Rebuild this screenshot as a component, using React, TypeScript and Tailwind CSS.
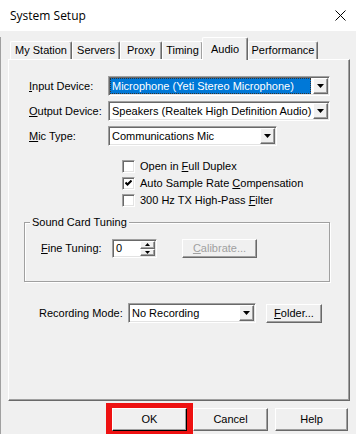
import React from "react";

const sunken =
  "border border-t-[#a0a0a0] border-l-[#a0a0a0] border-r-white border-b-white shadow-[inset_1px_1px_0_#696969,inset_-1px_-1px_0_#e3e3e3]";
const raised =
  "border border-t-white border-l-white border-r-[#696969] border-b-[#696969] shadow-[inset_-1px_-1px_0_#a0a0a0] bg-[#f0f0f0]";

function DownArrow() {
  return (
    <div className={`flex w-[15px] shrink-0 items-center justify-center ${raised}`}>
      <svg width="7" height="4" viewBox="0 0 7 4">
        <path d="M0 0h7L3.5 4z" fill="#000" />
      </svg>
    </div>
  );
}

function Combo({ className, text, selected }: { className: string; text: string; selected?: boolean }) {
  return (
    <div className={`flex h-[20px] shrink-0 bg-white p-px ${sunken} ${className}`}>
      <div className="flex min-w-0 flex-1 pr-[2px]">
        <div
          className={
            selected
              ? "flex w-full items-center whitespace-nowrap border border-dotted border-[#333] bg-[#0078d7] px-[1px] text-white"
              : "flex w-full items-center whitespace-nowrap px-[2px]"
          }
        >
          {text}
        </div>
      </div>
      <DownArrow />
    </div>
  );
}

function Label({ className, children }: { className: string; children: React.ReactNode }) {
  return <div className={`shrink-0 whitespace-nowrap ${className}`}>{children}</div>;
}

function Check({ checked, children }: { checked?: boolean; children: React.ReactNode }) {
  return (
    <div className="flex h-[17px] items-center">
      <div className={`flex h-[13px] w-[13px] items-center justify-center bg-white ${sunken}`}>
        {checked && (
          <svg width="7" height="7" viewBox="0 0 7 7">
            <path d="M0.5 2.5l2 2L6.5 0.5" stroke="#000" strokeWidth="2" fill="none" />
          </svg>
        )}
      </div>
      <span className="ml-[5px] whitespace-nowrap">{children}</span>
    </div>
  );
}

function Button({ className, children, disabled }: { className: string; children: React.ReactNode; disabled?: boolean }) {
  return (
    <div
      className={`flex shrink-0 items-center justify-center ${raised} ${disabled ? "text-[#a0a0a0]" : ""} ${className}`}
    >
      {children}
    </div>
  );
}

const tabs = [
  { name: "My Station", w: "w-[62px]" },
  { name: "Servers", w: "w-[48px]" },
  { name: "Proxy", w: "w-[42px]" },
  { name: "Timing", w: "w-[41px]" },
  { name: "Audio", w: "w-[46px]", active: true },
  { name: "Performance", w: "w-[70px]" },
];

export default function App() {
  return (
    <div className="h-[434px] w-[356px] overflow-hidden bg-[#f0f0f0] font-['Liberation_Sans',Arial,sans-serif] text-[11px] text-black">
      <div className="flex h-[31px] items-center justify-between bg-white pl-[10px] pr-[10px]">
        <span className="font-['Open_Sans',sans-serif] text-[12px]">System Setup</span>
        <svg width="11" height="11" viewBox="0 0 11 11">
          <path d="M0.5 0.5l10 10M10.5 0.5l-10 10" stroke="#000" strokeWidth="1" />
        </svg>
      </div>

      <div className="border-l border-[#a0a0a0]">
        <div className="relative z-10 mt-[6px] flex h-[22px] items-end pl-[9px]">
          {tabs.map((t) =>
            t.active ? (
              <div
                key={t.name}
                className={`-mb-px -ml-[1px] flex h-[23px] items-start justify-center rounded-t-[2px] border-l border-t border-r border-l-white border-t-white border-r-[#696969] bg-[#f0f0f0] pt-[3px] shadow-[inset_-1px_0_0_#a0a0a0] ${t.w}`}
              >
                {t.name}
              </div>
            ) : (
              <div
                key={t.name}
                className={`flex h-[18px] items-center justify-center rounded-t-[2px] border-l border-t border-r border-l-white border-t-white border-r-[#696969] shadow-[inset_-1px_0_0_#a0a0a0] ${t.w}`}
              >
                {t.name}
              </div>
            )
          )}
        </div>

        <div className="ml-[7px] flex h-[342px] w-[342px] flex-col border border-t-white border-l-white border-r-[#696969] border-b-[#696969] shadow-[inset_-1px_-1px_0_#a0a0a0]">
          <div className="mt-[16px] flex flex-col gap-[5px] pl-[20px]">
            <div className="flex items-center">
              <Label className="w-[79px]">
                <u>I</u>nput Device:
              </Label>
              <Combo className="w-[222px]" text="Microphone (Yeti Stereo Microphone)" selected />
            </div>
            <div className="flex items-center">
              <Label className="w-[79px]">
                <u>O</u>utput Device:
              </Label>
              <Combo className="w-[222px]" text="Speakers (Realtek High Definition Audio)" />
            </div>
            <div className="flex items-center">
              <Label className="w-[79px]">
                <u>M</u>ic Type:
              </Label>
              <Combo className="w-[169px]" text="Communications Mic" />
            </div>
          </div>

          <div className="ml-[113px] mt-[12px] flex flex-col">
            <Check>
              Open in <u>F</u>ull Duplex
            </Check>
            <Check checked>
              Auto Sample Rate <u>C</u>ompensation
            </Check>
            <Check>
              300 Hz TX High-Pass <u>F</u>ilter
            </Check>
          </div>

          <fieldset className="ml-[15px] mt-[6px] w-[306px] border border-[#a0a0a0] pb-[23px] shadow-[inset_1px_1px_0_#fff,1px_1px_0_#fff]">
            <legend className="ml-[5px] bg-[#f0f0f0] px-[2px] leading-[14px]">Sound Card Tuning</legend>
            <div className="mt-[10px] flex items-center pl-[16px]">
              <Label className="w-[71px]">
                <u>F</u>ine Tuning:
              </Label>
              <div className={`flex h-[19px] w-[45px] bg-white p-px ${sunken}`}>
                <div className="flex flex-1 items-center pl-[2px]">0</div>
                <div className="flex w-[15px] flex-col">
                  <div className={`flex flex-1 items-center justify-center ${raised}`}>
                    <svg width="5" height="3" viewBox="0 0 5 3">
                      <path d="M2.5 0L5 3H0z" fill="#000" />
                    </svg>
                  </div>
                  <div className={`flex flex-1 items-center justify-center ${raised}`}>
                    <svg width="5" height="3" viewBox="0 0 5 3">
                      <path d="M0 0h5L2.5 3z" fill="#000" />
                    </svg>
                  </div>
                </div>
              </div>
              <Button className="ml-[25px] h-[19px] w-[75px]" disabled>
                <span>
                  <u>C</u>alibrate...
                </span>
              </Button>
            </div>
          </fieldset>

          <div className="ml-[30px] mt-[21px] flex items-center">
            <Label className="w-[89px]">Recording Mode:</Label>
            <Combo className="w-[128px]" text="No Recording" />
            <Button className="ml-[10px] h-[19px] w-[56px]">
              <span>
                <u>F</u>older...
              </span>
            </Button>
          </div>
        </div>

        <div className="mt-[2px] flex items-start justify-end pr-[8px]">
          <div className="shrink-0 border-x-[6px] border-b-[6px] border-t-[5px] border-[#ee1111]">
            <Button className="h-[23px] w-[75px] border-r-black border-b-black">OK</Button>
          </div>
          <Button className="mt-[5px] h-[23px] w-[75px]">Cancel</Button>
          <Button className="ml-[7px] mt-[5px] h-[23px] w-[73px]">Help</Button>
        </div>
      </div>
    </div>
  );
}
